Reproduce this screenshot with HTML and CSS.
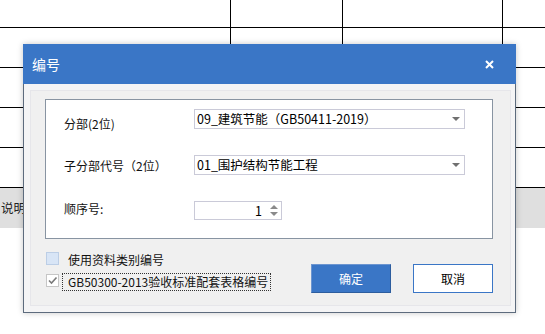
FILE: index.html
```html
<!DOCTYPE html>
<html lang="zh-CN">
<head>
<meta charset="utf-8">
<title>编号</title>
<link rel="stylesheet" href="styles.css">
</head>
<body>
<div class="sheet">
  <div class="row first"><div class="cell c1"></div><div class="cell c2"></div><div class="cell c3"></div><div class="cell c4"></div></div>
  <div class="row"><div class="cell c1"></div><div class="cell c2"></div><div class="cell c3"></div><div class="cell c4"></div></div>
  <div class="row"><div class="cell c1"></div><div class="cell c2"></div><div class="cell c3"></div><div class="cell c4"></div></div>
  <div class="row"><div class="cell c1"></div><div class="cell c2"></div><div class="cell c3"></div><div class="cell c4"></div></div>
  <div class="row"><div class="cell c1"></div><div class="cell c2"></div><div class="cell c3"></div><div class="cell c4"></div></div>
  <div class="row gray"><span class="note">说明</span></div>
</div>

<div class="dialog">
  <div class="titlebar">
    <span class="title">编号</span>
    <svg class="close" width="9" height="9" viewBox="0 0 9 9"><path d="M1 1L8 8M8 1L1 8" stroke="#fff" stroke-width="2" fill="none"/></svg>
  </div>
  <div class="body">
    <div class="panel">
      <div class="group">
        <div class="frow r1">
          <span class="label l1">分部(2位)</span>
          <div class="combo"><span class="val">09_建筑节能（GB50411-2019）</span><span class="arrow"></span></div>
        </div>
        <div class="frow r2">
          <span class="label l2">子分部代号（2位）</span>
          <div class="combo"><span class="val">01_围护结构节能工程</span><span class="arrow"></span></div>
        </div>
        <div class="frow r3">
          <span class="label l3">顺序号:</span>
          <div class="spin"><span class="num">1</span><span class="spinbtns"><span class="up"></span><span class="down"></span></span></div>
        </div>
      </div>
      <div class="bottom">
        <div class="checks">
          <div class="crow c-one"><span class="box blue"></span><span class="ctext">使用资料类别编号</span></div>
          <div class="crow c-two"><span class="box checked"><svg width="11" height="11" viewBox="0 0 11 11"><path d="M2 5.5L4.5 8L9.5 2.5" stroke="#7a7a7a" stroke-width="1.6" fill="none"/></svg></span><span class="ctext focus">GB50300-2013验收标准配套表格编号</span></div>
        </div>
        <div class="buttons">
          <button class="btn ok">确定</button>
          <button class="btn cancel">取消</button>
        </div>
      </div>
    </div>
  </div>
</div>
</body>
</html>
```
FILE: styles.css
```css
* { box-sizing: border-box; }
body {
  margin: 0;
  width: 545px;
  height: 334px;
  overflow: hidden;
  position: relative;
  background: #fff;
  font-family: "Noto Sans CJK SC", sans-serif;
  font-size: 12px;
  color: #000;
}
.sheet { width: 545px; }
.row { display: flex; height: 40px; border-bottom: 1px solid #000; }
.row.first { height: 28px; }
.cell { border-right: 1px solid #000; }
.c1 { width: 231px; }
.c2 { width: 112px; }
.c3 { width: 160px; }
.c4 { flex: 1; border-right: 0; }
.row.gray { background: #dfdfdf; border-bottom: 0; height: 40px; }
.note { line-height: 39px; padding-left: 1px; color: #222; font-size: 12.5px; }

.dialog {
  position: absolute;
  left: 23px;
  top: 44px;
  width: 493px;
  height: 269px;
  display: flex;
  flex-direction: column;
  box-shadow: 0 0 6px rgba(0,0,0,0.22);
}
.titlebar {
  height: 40px;
  background: #3a76c6;
  display: flex;
  align-items: center;
  justify-content: space-between;
  padding: 0 22px 0 9px;
}
.title { color: #fff; font-size: 14px; line-height: 18px; margin-top: -1px; }
.close { display: block; }
.body {
  flex: 1;
  background: #f4f4f5;
  border: 1px solid #5d6b7d;
  border-top: 0;
  padding: 6px 4px 6px 6px;
  display: flex;
}
.panel {
  flex: 1;
  background: #f0f0f0;
  border: 1px solid #e6e6ea;
  padding: 8px 17px 0 14px;
}
.group {
  height: 140px;
  background: #fff;
  border: 1px solid #8894a2;
  padding: 9px 0 0 18px;
}
.frow { display: flex; align-items: flex-start; height: 46px; }
.label { width: 130px; line-height: 16px; color: #111; white-space: nowrap; }
.l1 { margin-top: 7px; }
.l2 { margin-top: 3px; }
.l3 { margin-top: 0; }
.combo {
  width: 271px;
  height: 20px;
  border: 1px solid #cacad8;
  background: #fff;
  display: flex;
  align-items: center;
  justify-content: space-between;
  padding: 0 4px 0 2px;
}
.val { line-height: 16px; white-space: nowrap; color: #000; font-size: 12.5px; }
.arrow {
  width: 0; height: 0;
  border-left: 4px solid transparent;
  border-right: 4px solid transparent;
  border-top: 4px solid #707070;
}
.spin {
  width: 88px;
  height: 19px;
  border: 1px solid #cacad8;
  background: #fff;
  display: flex;
  align-items: center;
  justify-content: flex-end;
  padding-right: 3px;
}
.num { line-height: 16px; margin-right: 8px; font-size: 12.5px; }
.spinbtns { display: flex; flex-direction: column; gap: 3px; }
.up, .down { width: 0; height: 0; border-left: 4px solid transparent; border-right: 4px solid transparent; }
.up { border-bottom: 4px solid #8a8a8a; }
.down { border-top: 4px solid #8a8a8a; }

.bottom { display: flex; align-items: flex-start; margin-top: 13px; }
.checks { display: flex; flex-direction: column; margin-left: 1px; }
.crow { display: flex; align-items: flex-start; }
.c-one { height: 21px; }
.box { width: 13px; height: 13px; display: flex; align-items: center; justify-content: center; }
.box.blue { background: #d8e5f6; border: 1px solid #bccee6; }
.box.checked { background: #fff; border: 1px solid #c6c6c6; margin-top: 1px; }
.ctext { line-height: 16px; color: #111; white-space: nowrap; }
.c-one .ctext { margin-left: 9px; }
.ctext.focus { margin-left: 3px; border: 1px dotted #333; padding: 0 2px 0 5px; height: 18px; }
.buttons { margin-left: auto; margin-top: 12px; display: flex; gap: 22px; }
.btn {
  width: 80px;
  height: 29px;
  font-family: "Noto Sans CJK SC", sans-serif;
  font-size: 12px;
  padding: 0;
  cursor: default;
}
.ok {
  background: #3a76c6;
  color: #fff;
  border: 1px solid #2d5d9e;
  border-top-color: #6c95d0;
  border-left-color: #6c95d0;
}
.cancel { background: #fff; color: #000; border: 1px solid #3a76c6; }
```
